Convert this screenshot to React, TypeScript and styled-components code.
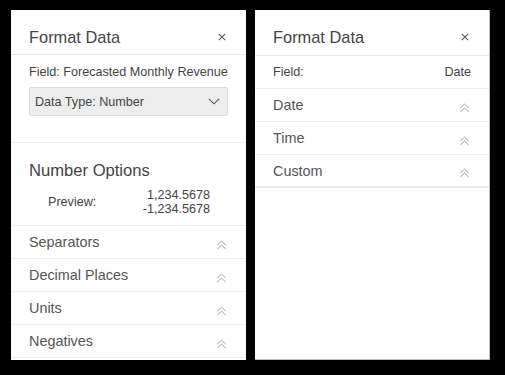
import React from "react";
import styled, { createGlobalStyle } from "styled-components";

const GlobalStyle = createGlobalStyle`
  html, body {
    margin: 0;
    padding: 0;
    background: #000;
  }
  body {
    font-family: "Liberation Sans", Arial, sans-serif;
  }
`;

const Stage = styled.main`
  display: flex;
  align-items: flex-start;
  gap: 9px;
  padding: 10px 0 0 11px;
  width: 505px;
  height: 375px;
  box-sizing: border-box;
  background: #000;
`;

const Panel = styled.section<{ $bordered?: boolean }>`
  width: 235px;
  height: 350px;
  box-sizing: border-box;
  background: #fff;
  display: flex;
  flex-direction: column;
  overflow: hidden;
  border-right: ${(p) => (p.$bordered ? "1px solid #b9b9b9" : "none")};
  border-bottom: ${(p) => (p.$bordered ? "1px solid #b9b9b9" : "none")};
`;

const Header = styled.header<{ $tall?: boolean }>`
  display: flex;
  align-items: center;
  justify-content: space-between;
  padding: 18px 18px ${(p) => (p.$tall ? "9px" : "8px")} 18px;
  border-bottom: 1px solid #e6e6e6;
`;

const Title = styled.h2`
  margin: 0;
  font-size: 16.4px;
  line-height: 18px;
  font-weight: 400;
  color: #444;
`;

const CloseButton = styled.button`
  border: 0;
  background: none;
  padding: 0;
  width: 16px;
  height: 16px;
  display: flex;
  align-items: center;
  justify-content: center;
  margin-right: -2px;
  cursor: pointer;
`;

const FieldSection = styled.div`
  padding: 9px 18px 26px;
  border-bottom: 1px solid #f0f0f0;
  display: flex;
  flex-direction: column;
  gap: 7px;
`;

const SmallText = styled.div`
  font-size: 12.6px;
  line-height: 16px;
  color: #444;
`;

const Select = styled.div`
  height: 29px;
  box-sizing: border-box;
  border: 1px solid #dcdcdc;
  border-radius: 2px;
  background: #ededed;
  display: flex;
  align-items: center;
  justify-content: space-between;
  padding: 0 7px 0 5px;
  font-size: 12.6px;
  color: #444;
`;

const OptionsSection = styled.div`
  padding: 18px 18px 9px;
  border-bottom: 1px solid #ececec;
`;

const SectionTitle = styled.h3`
  margin: 0 0 7px;
  font-size: 16.6px;
  line-height: 20px;
  font-weight: 400;
  color: #444;
`;

const Preview = styled.div`
  display: flex;
  align-items: center;
  justify-content: space-between;
  padding: 0 18px 0 19px;
`;

const PreviewValues = styled.div`
  text-align: right;
  font-size: 12.6px;
  line-height: 14px;
  color: #444;
`;

const Row = styled.div<{ $last?: boolean }>`
  height: 33px;
  box-sizing: border-box;
  display: flex;
  align-items: center;
  justify-content: space-between;
  padding: 0 18px;
  border-bottom: ${(p) => (p.$last ? "2px" : "1px")} solid #ececec;
  font-size: 14.4px;
  color: #555;
`;

const FieldRow = styled(Row)`
  font-size: 12.6px;
  color: #444;
`;

const RowIcon = styled.span`
  display: flex;
  margin-top: 5px;
  margin-right: 1px;
`;

const CloseIcon = () => (
  <svg width="8" height="8" viewBox="0 0 8 8">
    <path d="M0.8 0.8 L7.2 7.2 M7.2 0.8 L0.8 7.2" stroke="#5a5a5a" strokeWidth="1.1" fill="none" />
  </svg>
);

const ChevronDown = () => (
  <svg width="12" height="7" viewBox="0 0 12 7">
    <path d="M0.8 0.8 L6 5.8 L11.2 0.8" stroke="#555" strokeWidth="1.1" fill="none" />
  </svg>
);

const DoubleChevronUp = () => (
  <RowIcon>
    <svg width="11" height="10" viewBox="0 0 11 10">
      <path
        d="M1.2 5 L5.5 1.2 L9.8 5 M1.2 9 L5.5 5.2 L9.8 9"
        stroke="#a0a0a0"
        strokeWidth="1"
        fill="none"
      />
    </svg>
  </RowIcon>
);

const numberRows = ["Separators", "Decimal Places", "Units", "Negatives"];
const dateRows = ["Date", "Time", "Custom"];

function PanelHeader({ tall }: { tall?: boolean }) {
  return (
    <Header $tall={tall}>
      <Title>Format Data</Title>
      <CloseButton aria-label="Close">
        <CloseIcon />
      </CloseButton>
    </Header>
  );
}

export default function App() {
  return (
    <>
      <GlobalStyle />
      <Stage>
        <Panel>
          <PanelHeader />
          <FieldSection>
            <SmallText>Field: Forecasted Monthly Revenue</SmallText>
            <Select>
              <span>Data Type: Number</span>
              <ChevronDown />
            </Select>
          </FieldSection>
          <OptionsSection>
            <SectionTitle>Number Options</SectionTitle>
            <Preview>
              <SmallText>Preview:</SmallText>
              <PreviewValues>
                <div>1,234.5678</div>
                <div>-1,234.5678</div>
              </PreviewValues>
            </Preview>
          </OptionsSection>
          {numberRows.map((label) => (
            <Row key={label}>
              <span>{label}</span>
              <DoubleChevronUp />
            </Row>
          ))}
        </Panel>
        <Panel $bordered>
          <PanelHeader tall />
          <FieldRow>
            <span>Field:</span>
            <span>Date</span>
          </FieldRow>
          {dateRows.map((label, index) => (
            <Row key={label} $last={index === dateRows.length - 1}>
              <span>{label}</span>
              <DoubleChevronUp />
            </Row>
          ))}
        </Panel>
      </Stage>
    </>
  );
}
